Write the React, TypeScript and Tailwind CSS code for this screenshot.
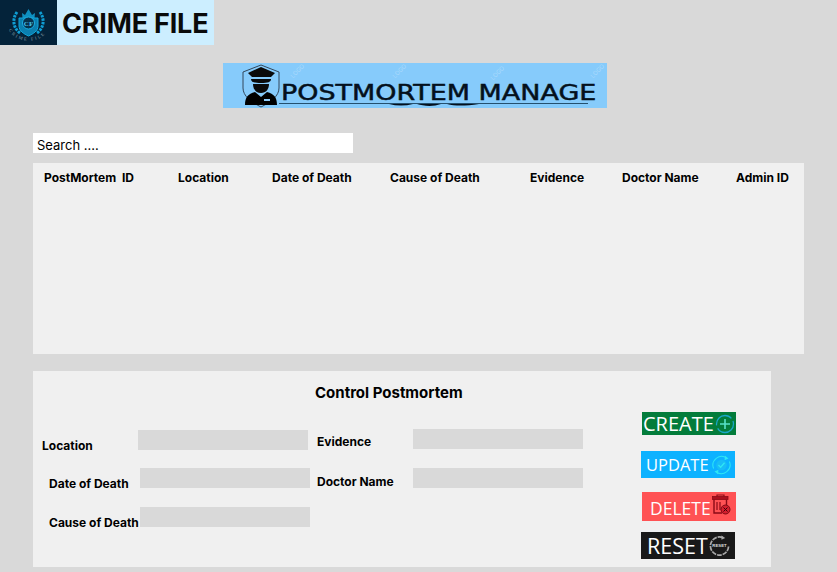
const inter = "font-['Inter',sans-serif]";

const columns = ['PostMortem  ID', 'Location', 'Date of Death', 'Cause of Death', 'Evidence', 'Doctor Name', 'Admin ID'];

const Field = () => <div className="h-5 w-[170px] shrink-0 bg-[#d9d9d9]" />;

const Label = ({ text, className }: { text: string; className: string }) => (
  <span className={`text-[12px] leading-[15px] font-bold whitespace-nowrap text-black ${className}`}>{text}</span>
);

const Watermark = ({ className }: { className: string }) => (
  <span className={`absolute -rotate-45 text-[6px] leading-none text-white/30 ${className}`}>LOGO</span>
);

const Crest = () => (
  <svg viewBox="0 0 57 45" className="h-[45px] w-[57px] shrink-0 bg-[#04233a]">
    <path d="M22 13 L25 15 L28.500 9 L32 15 L35 13 L34.500 18 H22.500 Z" fill="#0f8fc0" />
    <path d="M19 18 H38 V26 C38 31 33 34 28.500 36 C24 34 19 31 19 26 Z" fill="#0b7fb0" stroke="#12a8dc" />
    <circle cx="28.500" cy="23" r="6" fill="#06314d" stroke="#1ab0e4" />
    <path d="M17 12 C12 19 13 28 20 33 M40 12 C45 19 44 28 37 33" fill="none" stroke="#0f9ed4" strokeWidth="3" strokeDasharray="2.500 1" />
    <text x="28.500" y="25.500" textAnchor="middle" fontSize="7" fontWeight="700" fill="#46c4ee" fontFamily="Liberation Serif">CF</text>
    <path id="crest-arc" d="M8 28 C15 45 42 45 49 28" fill="none" />
    <text fontSize="4.500" fill="#8a9ea8" fontFamily="Liberation Serif" letterSpacing="1.800">
      <textPath href="#crest-arc" startOffset="4%">CRIME FILE</textPath>
    </text>
  </svg>
);

const Officer = () => (
  <svg viewBox="0 0 40 44" className="h-[44px] w-[40px] shrink-0">
    <path d="M1 8 L19 1 L37 8 V24 C37 32 29 38 19 43 C9 38 1 32 1 24 Z" fill="none" stroke="#33475a" strokeWidth="1" />
    <path d="M6 9 L19 3 L33 9 L29 13 H10 Z" fill="#0a0a0a" />
    <path d="M9 15 H29 C29 18 26 19 19 19 C12 19 9 18 9 15 Z" fill="#0a0a0a" />
    <path d="M11 20 H27 C27 25 24 29 19 29 C14 29 11 25 11 20 Z" fill="#0a0a0a" />
    <path d="M3 41 C3 33 6 30 13 28 L19 33 L25 28 C32 30 35 33 35 41 Z" fill="#000" />
    <rect x="22" y="35" width="6" height="2" fill="#8fcdfb" />
  </svg>
);

const Brush = () => (
  <svg viewBox="0 0 90 4" className="absolute top-[40px] left-[166px] h-1 w-[90px]">
    <path d="M0 1 C8 3 16 3 24 1 L28 1 C34 3 44 4 52 1 L58 1 C66 3 76 3 90 1 Z" fill="#04101c" />
  </svg>
);

const Plus = () => (
  <svg viewBox="0 0 20 20" className="h-5 w-5 shrink-0" fill="none">
    <circle cx="10" cy="10" r="8.500" stroke="#1aa6c9" strokeWidth="1.300" strokeDasharray="22 3" />
    <path d="M10 5 V15 M5 10 H15" stroke="#57e0c8" strokeWidth="1.600" />
  </svg>
);

const Check = () => (
  <svg viewBox="0 0 24 24" className="h-6 w-[21px] shrink-0" fill="none">
    <path d="M3 16 A10 10 0 0 1 18 4" stroke="#2ee6f5" strokeWidth="1.200" />
    <path d="M21 8 A10 10 0 0 1 6 20" stroke="#2ee6f5" strokeWidth="1.200" />
    <path d="M16 1.500 L20 4.500 L15.500 6.500 Z M8 22.500 L4 19.500 L8.500 17.500 Z" fill="#2ee6f5" />
    <circle cx="12" cy="12" r="6" fill="#27c9ee" fillOpacity="0.45" />
    <path d="M8.500 12 L11 14.500 L15.500 9.500" stroke="#2ee6f5" strokeWidth="1.500" />
  </svg>
);

const Trash = () => (
  <svg viewBox="0 0 19 21" className="h-[21px] w-[19px] shrink-0" fill="none">
    <path d="M5 2.500 V1 H12 V2.500" stroke="#8b0a16" strokeWidth="1.200" />
    <rect x="0.500" y="2.500" width="15.500" height="3" fill="#a90f1e" stroke="#8b0a16" strokeWidth="0.800" />
    <path d="M2 5.500 V19 H10 M14.500 5.500 V11" stroke="#8b0a16" strokeWidth="1.400" />
    <path d="M5 8 V16 M8 8 V16" stroke="#8b0a16" strokeWidth="1.200" />
    <circle cx="13.500" cy="15.500" r="4.500" fill="#d41f2e" stroke="#7b0912" />
    <path d="M11.500 13.500 L15.500 17.500 M15.500 13.500 L11.500 17.500" stroke="#3d0308" strokeWidth="1" />
  </svg>
);

const ResetIcon = () => (
  <svg viewBox="0 0 22 22" className="h-[22px] w-[21px] shrink-0" fill="none">
    <path d="M14 2 A9.500 9.500 0 1 0 20.500 11" stroke="#a8a8a8" strokeWidth="1.800" strokeDasharray="5 1" />
    <path d="M13 0 L17 2.500 L13 4.500 Z" fill="#a8a8a8" />
    <text x="11" y="12.500" textAnchor="middle" fontSize="4.500" fontWeight="700" fill="#dcdcdc" fontFamily="Liberation Sans">RESET</text>
  </svg>
);

export default function App() {
  return (
    <div className={`h-[572px] w-[837px] overflow-hidden bg-[#d9d9d9] ${inter}`}>
      {/* Logo */}
      <div className="flex h-[45px] w-[214px]">
        <Crest />
        <div className="flex flex-1 items-center bg-[#cceeff] pt-[3px] pl-[5px] text-[27px] font-bold tracking-[-0.2px] whitespace-nowrap text-[#0a0a0a]">CRIME FILE</div>
      </div>

      {/* Banner */}
      <div className="relative mt-[18px] ml-[223px] flex h-[45px] w-[384px] items-center overflow-hidden bg-[#86cbfb] pl-[19px]">
        <Officer />
        <span className="mt-[15px] -ml-[1px] origin-left scale-x-[1.225] font-['DejaVu_Sans',sans-serif] text-[22px] leading-none font-normal whitespace-nowrap text-[#04101c] [-webkit-text-stroke:0.5px_#04101c]">
          POSTMORTEM MANAGE
        </span>
        {/* brush line under the wordmark */}
        <div className="absolute top-[40px] left-[56px] h-px w-[309px] bg-[#24506e]" />
        <Brush />
        {/* stock logo watermark */}
        <Watermark className="top-[5px] left-[66px]" />
        <Watermark className="top-[5px] left-[168px]" />
        <Watermark className="top-[7px] left-[266px]" />
        <Watermark className="top-[5px] left-[366px]" />
      </div>

      {/* Search */}
      <div className="mt-[25px] ml-[33px] flex h-5 w-[320px] items-end bg-white pl-1 text-[13px] leading-[15px] text-black">Search ....</div>

      {/* Table */}
      <div className="mt-[10px] ml-[33px] h-[191px] w-[771px] bg-[#f0f0f0] pt-[7px] pl-[11px]">
        <div className="grid grid-cols-[134px_94px_118px_140px_92px_114px_auto] text-[12px] leading-[15px] font-bold text-black">
          {columns.map((c) => (
            <span key={c} className="whitespace-pre">{c}</span>
          ))}
        </div>
      </div>

      {/* Control panel */}
      <div className="mt-[17px] ml-[33px] flex h-[196px] w-[738px] bg-[#f0f0f0]">
        <div className="w-[600px]">
          <h2 className="mt-[13px] ml-[282px] text-[15px] leading-[18px] font-bold whitespace-nowrap text-black">Control Postmortem</h2>
          <div className="mt-[28px] flex">
            <div className="w-[284px]">
              <div className="flex">
                <Label text="Location" className="mt-[8px] ml-[9px] w-[96px]" />
                <Field />
              </div>
              <div className="mt-[15px] flex">
                <Label text="Date of Death" className="mt-[8px] ml-[16px] w-[91px]" />
                <Field />
              </div>
              <div className="mt-[16px] flex">
                <Label text="Cause of Death" className="mt-[8px] ml-[16px] w-[91px]" />
                <Field />
              </div>
            </div>
            <div className="-mt-[1px]">
              <div className="flex">
                <Label text="Evidence" className="mt-[5px] w-[96px]" />
                <Field />
              </div>
              <div className="mt-[19px] flex">
                <Label text="Doctor Name" className="mt-[6px] w-[96px]" />
                <Field />
              </div>
            </div>
          </div>
        </div>

        {/* Actions */}
        <div className="mt-[41px] ml-[8px] flex w-[96px] flex-col font-['Open_Sans',sans-serif] font-normal text-white">
          <div className="ml-[1px] flex h-[23px] w-[94px] items-center justify-between bg-[#037c3b] pr-[1px] pl-[1px] text-[20px] leading-none">
            CREATE<Plus />
          </div>
          <div className="mt-[16px] flex h-[27px] w-[94px] items-center justify-between bg-[#0db2ff] pt-[1px] pr-[3px] pl-[5px] text-[16.500px] leading-none">
            UPDATE<Check />
          </div>
          <div className="mt-[14px] ml-[1px] flex h-[29px] w-[94px] items-center justify-between bg-[#ff5254] pr-[5px] pl-[8px] text-[17.500px] leading-none">
            <span className="mt-[5px]">DELETE</span><span className="-mt-[4px]"><Trash /></span>
          </div>
          <div className="mt-[11px] flex h-[27px] w-[94px] items-center justify-between bg-[#191919] pr-[5px] pl-[6px] text-[21.500px] leading-none">
            RESET<ResetIcon />
          </div>
        </div>
      </div>
    </div>
  );
}
